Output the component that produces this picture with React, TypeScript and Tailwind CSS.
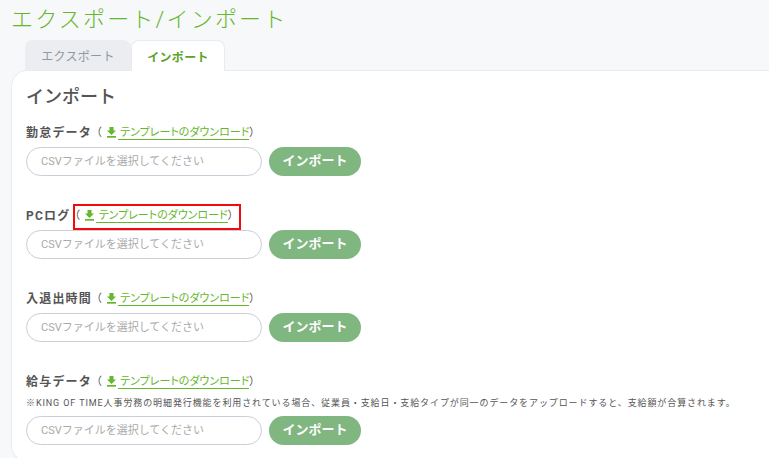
import React from "react";

type Section = {
  id: string;
  label: string;
  note?: string;
  highlighted?: boolean;
};

const sections: Section[] = [
  { id: "attendance", label: "勤怠データ" },
  { id: "pclog", label: "PCログ", highlighted: true },
  { id: "entry", label: "入退出時間" },
  {
    id: "salary",
    label: "給与データ",
    note: "※KING OF TIME人事労務の明細発行機能を利用されている場合、従業員・支給日・支給タイプが同一のデータをアップロードすると、支給額が合算されます。",
  },
];

function DownloadIcon() {
  return (
    <svg viewBox="0 0 11 11" className="mb-0.5 h-[11px] w-[11px] fill-[#65b72c]" aria-hidden="true">
      <path d="M3.5 0h4v3.5h2.5L5.5 8 1 3.5h2.5z" />
      <path d="M1 9h9v1.7H1z" />
    </svg>
  );
}

function TemplateLink({ highlighted }: { highlighted?: boolean }) {
  return (
    <span className="relative flex items-center text-[11px] text-[#555] [font-feature-settings:'palt']">
      <span className="pl-[3px] pr-1">（</span>
      <DownloadIcon />
      <a
        href="#template"
        className="ml-px mt-px whitespace-pre border-b border-[#65b72c] leading-3 text-[#65b72c]"
      >
        {" "}テンプレートのダウンロード
      </a>
      <span>）</span>
      {highlighted && (
        <span className="pointer-events-none absolute -bottom-1.5 -right-2 -top-1 left-0.5 border-2 border-[#f30b0b]" />
      )}
    </span>
  );
}

function ImportSection({ id, label, note, highlighted }: Section) {
  return (
    <section>
      <div className="flex h-[18px] items-center gap-px">
        <label htmlFor={id} className="text-xs font-bold tracking-widest">
          {label}
        </label>
        <TemplateLink highlighted={highlighted} />
      </div>
      {note && <p className="mt-1 whitespace-nowrap text-[9px] leading-4 tracking-widest">{note}</p>}
      <div className="mt-[5px] flex items-center gap-[7px]">
        <input
          id={id}
          type="text"
          readOnly
          placeholder="CSVファイルを選択してください"
          className="h-[29px] w-[236px] rounded-full border border-[#c9ced8] bg-white px-3.5 text-[11px] placeholder:text-[#aaa]"
        />
        <button
          type="button"
          className="flex h-[29px] w-[92px] items-center justify-center rounded-full bg-[#80b680] pb-0.5 text-[13px] font-bold text-white"
        >
          インポート
        </button>
      </div>
    </section>
  );
}

export default function App() {
  return (
    <main className="min-h-screen overflow-hidden bg-[#f7f8fa] pl-[11px] font-['Roboto','Noto_Sans_CJK_JP',sans-serif] text-[#555]">
      <h1 className="h-10 text-[22px] font-light leading-10 tracking-widest text-[#65b72c]">
        エクスポート/インポート
      </h1>
      <div role="tablist" className="relative -mb-px ml-3.5 flex h-[31px] text-xs tracking-wide">
        <button
          type="button"
          role="tab"
          aria-selected="false"
          className="mb-px w-[106px] rounded-t-lg bg-[#ecedf1] pt-1 text-[#8e99a5]"
        >
          エクスポート
        </button>
        <button
          type="button"
          role="tab"
          aria-selected="true"
          className="w-[94px] rounded-t-lg border border-b-0 border-[#e9ebef] bg-white pt-1 font-bold text-[#5ba22b]"
        >
          インポート
        </button>
      </div>
      <div className="rounded-l-2xl border border-r-0 border-[#e9ebef] bg-white pb-4 pl-3.5 pt-3">
        <h2 className="text-lg font-medium leading-7">インポート</h2>
        <div className="mt-[13px] flex flex-col gap-[31px]">
          {sections.map((section) => (
            <ImportSection key={section.id} {...section} />
          ))}
        </div>
      </div>
    </main>
  );
}
